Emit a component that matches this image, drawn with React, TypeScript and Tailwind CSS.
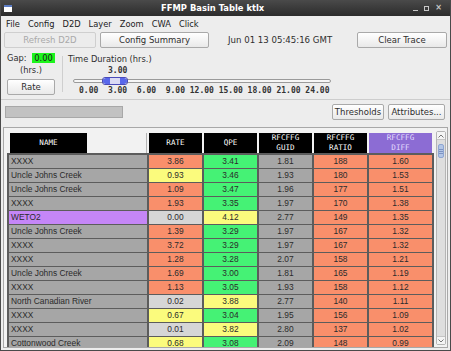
import React from 'react';

type Row = {
  name: string;
  nameBg?: string;
  rate: string;
  rateBg: string;
  qpe: string;
  qpeBg: string;
  guid: string;
  ratio: string;
  diff: string;
};

const SAL = 'bg-[#f98f6b]';
const GRN = 'bg-[#45f275]';
const YEL = 'bg-[#fbfb7d]';
const LGR = 'bg-[#d6d6d6]';
const GRY = 'bg-[#a6a6a6]';
const PUR = 'bg-[#c586f7]';

const rows: Row[] = [
  { name: 'XXXX', rate: '3.86', rateBg: SAL, qpe: '3.41', qpeBg: GRN, guid: '1.81', ratio: '188', diff: '1.60' },
  { name: 'Uncle Johns Creek', rate: '0.93', rateBg: YEL, qpe: '3.46', qpeBg: GRN, guid: '1.93', ratio: '180', diff: '1.53' },
  { name: 'Uncle Johns Creek', rate: '1.09', rateBg: SAL, qpe: '3.47', qpeBg: GRN, guid: '1.96', ratio: '177', diff: '1.51' },
  { name: 'XXXX', rate: '1.93', rateBg: SAL, qpe: '3.35', qpeBg: GRN, guid: '1.97', ratio: '170', diff: '1.38' },
  { name: 'WETO2', nameBg: PUR, rate: '0.00', rateBg: LGR, qpe: '4.12', qpeBg: YEL, guid: '2.77', ratio: '149', diff: '1.35' },
  { name: 'Uncle Johns Creek', rate: '1.39', rateBg: SAL, qpe: '3.29', qpeBg: GRN, guid: '1.97', ratio: '167', diff: '1.32' },
  { name: 'XXXX', rate: '3.72', rateBg: SAL, qpe: '3.29', qpeBg: GRN, guid: '1.97', ratio: '167', diff: '1.32' },
  { name: 'XXXX', rate: '1.28', rateBg: SAL, qpe: '3.28', qpeBg: GRN, guid: '2.07', ratio: '158', diff: '1.21' },
  { name: 'Uncle Johns Creek', rate: '1.69', rateBg: SAL, qpe: '3.00', qpeBg: GRN, guid: '1.81', ratio: '165', diff: '1.19' },
  { name: 'XXXX', rate: '1.13', rateBg: SAL, qpe: '3.05', qpeBg: GRN, guid: '1.93', ratio: '158', diff: '1.12' },
  { name: 'North Canadian River', rate: '0.02', rateBg: LGR, qpe: '3.88', qpeBg: YEL, guid: '2.77', ratio: '140', diff: '1.11' },
  { name: 'XXXX', rate: '0.67', rateBg: YEL, qpe: '3.04', qpeBg: GRN, guid: '1.95', ratio: '156', diff: '1.09' },
  { name: 'XXXX', rate: '0.01', rateBg: LGR, qpe: '3.82', qpeBg: YEL, guid: '2.80', ratio: '137', diff: '1.02' },
  { name: 'Cottonwood Creek', rate: '0.68', rateBg: YEL, qpe: '3.08', qpeBg: GRN, guid: '2.09', ratio: '148', diff: '0.99' },
];

const menus = ['File', 'Config', 'D2D', 'Layer', 'Zoom', 'CWA', 'Click'];

const btn =
  'h-[16px] border border-[#a9a9a9] rounded-[2px] bg-linear-to-b from-white to-[#e9e9e9] text-[8.5px] text-[#2e2e2e] flex items-center justify-center';

function HeadCell({ w, lines, purple }: { w: string; lines: string[]; purple?: boolean }) {
  return (
    <div
      className={`${w} h-full flex flex-col items-center justify-center font-['DejaVu_Sans_Mono',monospace] text-[7.6px] leading-[10px] ${
        purple ? 'bg-[#8c6cd4] text-[#e4ddff]' : 'bg-black text-white'
      }`}
    >
      {lines.map((l) => (
        <span key={l}>{l}</span>
      ))}
    </div>
  );
}

function Cell({ w, bg, children }: { w: string; bg: string; children: React.ReactNode }) {
  return <div className={`${w} ${bg} flex items-center justify-center`}>{children}</div>;
}

export default function App() {
  return (
    <div className="w-[451px] h-[351px] overflow-hidden flex flex-col bg-[#ededed] border-x border-b border-[#4a4a4a] font-['DejaVu_Sans',sans-serif] text-[#2e2e2e]">
      {/* title bar */}
      <div className="h-[16px] flex-shrink-0 flex items-center bg-linear-to-b from-[#4a4a4a] to-[#2c2c2c] px-[2px]">
        <div className="w-[8px] h-[7px] bg-white border-t-2 border-[#5b7cc4] ml-[1px]" />
        <div className="flex-1 text-center text-white font-bold text-[8.4px] leading-none">FFMP Basin Table ktlx</div>
        <div className="flex items-center gap-[6px] text-[#c8c8c8] text-[8px] leading-none pr-[6px]">
          <span className="w-[5px] h-[1px] bg-[#c8c8c8] mt-[4px]" />
          <span className="w-[5px] h-[5px] border border-[#c8c8c8]" />
          <span className="font-bold">×</span>
        </div>
      </div>

      {/* menu bar */}
      <div className="h-[16px] flex-shrink-0 flex items-center pl-[1px] text-[8.3px] text-[#222]">
        {menus.map((m) => (
          <span key={m} className="px-[4px]">
            {m}
          </span>
        ))}
      </div>

      {/* button row */}
      <div className="h-[17px] flex-shrink-0 flex items-start pl-[3px] pr-[3px]">
        <div className="w-[92px] h-[16px] border border-[#cfcfcf] rounded-[2px] bg-[#ececec] text-[8.5px] text-[#a9a9a9] flex items-center justify-center">
          Refresh D2D
        </div>
        <div className={`${btn} w-[109px] ml-[4px]`}>Config Summary</div>
        <div className="ml-[19px] h-[16px] flex items-center text-[8.6px]">Jun 01 13 05:45:16 GMT</div>
        <div className={`${btn} w-[90px] ml-auto`}>Clear Trace</div>
      </div>

      {/* controls */}
      <div className="h-[50px] flex-shrink-0 flex">
        <div className="w-[48px] ml-[6px] flex flex-col items-center pt-[4px]">
          <div className="w-full flex items-center justify-between text-[8.3px] leading-[10px]">
            <span>Gap:</span>
            <span className="w-[23px] h-[10px] bg-[#1cf51c] text-center text-[#1a1a1a]">0.00</span>
          </div>
          <div className="text-[8.3px] leading-[10px] mt-[2px]">(hrs.)</div>
          <div className={`${btn} w-[48px] mt-[4px]`}>Rate</div>
        </div>
        <div className="w-[1px] h-[36px] bg-[#cfcfcf] ml-[7px] mt-[7px]" />
        <div className="flex flex-col ml-[5px] pt-[5px]">
          <div className="text-[8.3px] leading-[10px]">Time Duration (hrs.)</div>
          <div className="ml-[40px] mt-[2px] font-['DejaVu_Sans_Mono',monospace] font-bold text-[8px] leading-[10px] text-[#333]">
            3.00
          </div>
          <div className="relative ml-[5px] mt-[1px] w-[258px] h-[8px] flex items-center">
            <div className="absolute left-0 right-0 top-[2px] h-[4px] rounded-full border border-[#9a9a9a] bg-[#f6f6f6]" />
            <div className="relative ml-[29px] w-[26px] h-[8px] flex rounded-[3px] overflow-hidden border border-[#4a4ab8]">
              <div className="w-[7px] bg-[#5867ea] rounded-l-[3px]" />
              <div className="flex-1 bg-[#dadaf4]" />
              <div className="w-[7px] bg-[#5867ea] rounded-r-[3px]" />
            </div>
          </div>
          <div className="ml-[11px] mt-[1px] whitespace-pre font-['DejaVu_Sans_Mono',monospace] font-bold text-[8px] leading-[10px] text-[#333]">
            {'0.00  3.00  6.00  9.00 12.00 15.00 18.00 21.00 24.00'}
          </div>
        </div>
      </div>

      {/* separator */}
      <div className="h-[1px] flex-shrink-0 bg-[#cdcdcd]" />

      {/* progress / buttons */}
      <div className="h-[24px] flex-shrink-0 flex items-center pl-[4px] pr-[5px]">
        <div className="w-[118px] h-[12px] bg-[#c2c2c2] border border-[#a8a8a8]" />
        <div className={`${btn} w-[52px] ml-auto`}>Thresholds</div>
        <div className={`${btn} w-[57px] ml-[4px]`}>Attributes...</div>
      </div>

      {/* table frame */}
      <div className="mt-[3px] ml-[2px] w-[445px] h-[221px] flex-shrink-0 border border-[#a8a8a8] bg-[#f2f2f2] flex pl-[3px] pr-[1px]">
        <div className="w-[427px] flex flex-col overflow-hidden pt-[5px]">
          {/* header */}
          <div className="h-[20px] flex-shrink-0 flex gap-[2px] pl-[2px]">
            <div className="w-[138px] h-full flex border-r border-[#b4b4b4]">
              <div className="w-[77px] ml-[1px] bg-black text-white flex items-center justify-center font-['DejaVu_Sans_Mono',monospace] text-[7.6px]">
                NAME
              </div>
            </div>
            <HeadCell w="w-[53px]" lines={['RATE']} />
            <HeadCell w="w-[53px]" lines={['QPE']} />
            <HeadCell w="w-[53px]" lines={['RFCFFG', 'GUID']} />
            <HeadCell w="w-[53px]" lines={['RFCFFG', 'RATIO']} />
            <HeadCell w="w-[63px]" lines={['RFCFFG', 'DIFF']} purple />
          </div>
          {/* body */}
          <div className="flex-1 overflow-hidden bg-[#5c5c5c] px-[2px] pt-[2px] flex flex-col gap-[1px] font-['Liberation_Sans',Arial,sans-serif] text-[8.4px] text-[#2b2b2b]">
            {rows.map((r, i) => (
              <div key={i} className="h-[13px] flex-shrink-0 flex gap-[2px]">
                <div className={`w-[138px] ${r.nameBg ?? GRY} flex items-center pl-[2px]`}>{r.name}</div>
                <Cell w="w-[53px]" bg={r.rateBg}>{r.rate}</Cell>
                <Cell w="w-[53px]" bg={r.qpeBg}>{r.qpe}</Cell>
                <Cell w="w-[53px]" bg={GRY}>{r.guid}</Cell>
                <Cell w="w-[53px]" bg={SAL}>{r.ratio}</Cell>
                <Cell w="w-[63px]" bg={SAL}>{r.diff}</Cell>
              </div>
            ))}
          </div>
        </div>

        {/* scrollbar */}
        <div className="ml-[2px] mt-[3px] mb-[2px] w-[10px] flex flex-col border border-[#b5b5b5] rounded-[2px] bg-[#dedede]">
          <div className="h-[8px] flex items-center justify-center bg-[#f4f4f4] border-b border-[#c4c4c4]">
            <svg width="6" height="4" viewBox="0 0 6 4">
              <path d="M0.5 3.5 L3 1 L5.5 3.5" fill="none" stroke="#777" strokeWidth="1" />
            </svg>
          </div>
          <div className="mt-[4px] mx-[1px] h-[14px] rounded-[2px] bg-[#b3c6e6] border border-[#8ea6d2] flex flex-col items-center justify-center gap-[1px]">
            <span className="w-[4px] h-[1px] bg-[#7d93c2]" />
            <span className="w-[4px] h-[1px] bg-[#7d93c2]" />
            <span className="w-[4px] h-[1px] bg-[#7d93c2]" />
          </div>
          <div className="flex-1" />
          <div className="h-[8px] flex items-center justify-center bg-[#f4f4f4] border-t border-[#c4c4c4]">
            <svg width="6" height="4" viewBox="0 0 6 4">
              <path d="M0.5 0.5 L3 3 L5.5 0.5" fill="none" stroke="#777" strokeWidth="1" />
            </svg>
          </div>
        </div>
      </div>
    </div>
  );
}
